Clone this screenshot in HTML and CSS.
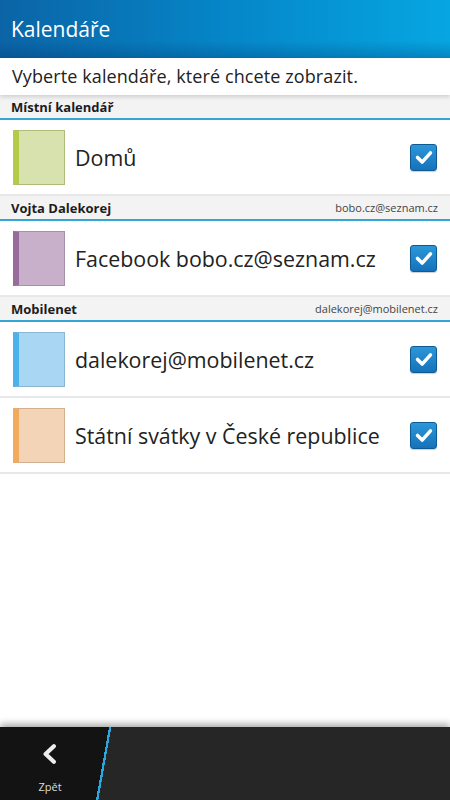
FILE: index.html
```html
<!DOCTYPE html>
<html lang="cs">
<head>
	<meta charset="UTF-8">
	<title>Kalendáře</title>
	<link rel="stylesheet" href="styles.css">
</head>
<body>
	<div class="titleBar">Kalendáře</div>
	<div class="intro">Vyberte kalendáře, které chcete zobrazit.</div>
	<div class="list">
		<div class="groupHead"><span class="groupName">Místní kalendář</span></div>
		<div class="item">
			<div class="swatch green"></div>
			<div class="itemName">Domů</div>
			<div class="check"><svg viewBox="0 0 26 26"><path d="M6 13.5 L11 18.5 L20 8.5" fill="none" stroke="#fff" stroke-width="3.8" stroke-linecap="round" stroke-linejoin="round"/></svg></div>
		</div>
		<div class="groupHead"><span class="groupName">Vojta Dalekorej</span><span class="groupMail">bobo.cz@seznam.cz</span></div>
		<div class="item">
			<div class="swatch purple"></div>
			<div class="itemName">Facebook bobo.cz@seznam.cz</div>
			<div class="check"><svg viewBox="0 0 26 26"><path d="M6 13.5 L11 18.5 L20 8.5" fill="none" stroke="#fff" stroke-width="3.8" stroke-linecap="round" stroke-linejoin="round"/></svg></div>
		</div>
		<div class="groupHead"><span class="groupName">Mobilenet</span><span class="groupMail">dalekorej@mobilenet.cz</span></div>
		<div class="item">
			<div class="swatch blue"></div>
			<div class="itemName">dalekorej@mobilenet.cz</div>
			<div class="check"><svg viewBox="0 0 26 26"><path d="M6 13.5 L11 18.5 L20 8.5" fill="none" stroke="#fff" stroke-width="3.8" stroke-linecap="round" stroke-linejoin="round"/></svg></div>
		</div>
		<div class="item">
			<div class="swatch orange"></div>
			<div class="itemName">Státní svátky v České republice</div>
			<div class="check"><svg viewBox="0 0 26 26"><path d="M6 13.5 L11 18.5 L20 8.5" fill="none" stroke="#fff" stroke-width="3.8" stroke-linecap="round" stroke-linejoin="round"/></svg></div>
		</div>
	</div>
	<div class="actionBar">
		<div class="backBtn">
			<svg viewBox="0 0 20 20" width="20" height="20"><path d="M13.5 3 L6 10 L13.5 17" fill="none" stroke="#eee" stroke-width="3.8" stroke-linecap="round" stroke-linejoin="round"/></svg>
			<span>Zpět</span>
		</div>
	</div>
</body>
</html>
```

FILE: styles.css
```css
*{margin:0;padding:0;box-sizing:border-box;}
html,body{height:800px;overflow:hidden;}
body{width:450px;display:flex;flex-direction:column;background:#fff;font-family:"Open Sans","Liberation Sans",sans-serif;color:#222;}
.titleBar{height:58px;flex:none;padding-left:11px;line-height:58px;font-size:21px;color:#fff;background:linear-gradient(to bottom,rgba(0,0,0,0) 70%,rgba(0,40,90,0.25)),linear-gradient(to right,#0b64a6,#0586c8 50%,#06a6e2);}
.intro{height:37px;flex:none;padding-left:12px;line-height:37px;font-size:18px;color:#222;box-shadow:0 2px 4px rgba(0,0,0,0.15);position:relative;z-index:1;letter-spacing:0.1px;}
.list{flex:1;}
.groupHead{height:25px;display:flex;align-items:center;justify-content:space-between;padding:0 12px 0 11px;background:#f3f3f3;border-bottom:2px solid #33a6d6;}
.groupName{font-size:13px;font-weight:bold;color:#1d1d1d;}
.groupMail{font-size:11px;color:#444;}
.item{height:76px;display:flex;align-items:center;padding:0 13px;border-bottom:2px solid #e8e8e8;}
.swatch{width:52px;height:55px;flex:none;border:1px solid #9a9a9a;border-left-width:6px;}
.green{background:#d8e2af;border-color:#adbc7a;border-left-color:#b4ca49;}
.purple{background:#c9b0ca;border-color:#a68fa8;border-left-color:#996a9c;}
.blue{background:#a9d6f2;border-color:#8ab6d4;border-left-color:#4cb2ec;}
.orange{background:#f3d4b6;border-color:#d2b08f;border-left-color:#f2aa5c;}
.itemName{flex:1;padding-left:10px;font-size:21.4px;color:#222;}
.check{width:27px;height:27px;flex:none;border-radius:3px;border:1px solid #0e5a95;background:linear-gradient(to bottom,#2c97d8,#1572ba);display:flex;align-items:center;justify-content:center;box-shadow:0 1px 1px rgba(0,0,0,0.2);}
.check svg{width:24px;height:24px;}
.actionBar{height:73px;flex:none;background:#262626;display:flex;box-shadow:0 -3px 7px rgba(0,0,0,0.35);}
.backBtn{width:112px;display:flex;flex-direction:column;align-items:center;padding:16px 12px 0 0;background:linear-gradient(100.1deg,#131313 107.3px,#2aa6e0 107.3px,#2aa6e0 109.6px,transparent 109.6px);}
.backBtn svg{width:22px;height:22px;}
.backBtn span{margin-top:14px;font-size:11px;color:#ddd;}
```
